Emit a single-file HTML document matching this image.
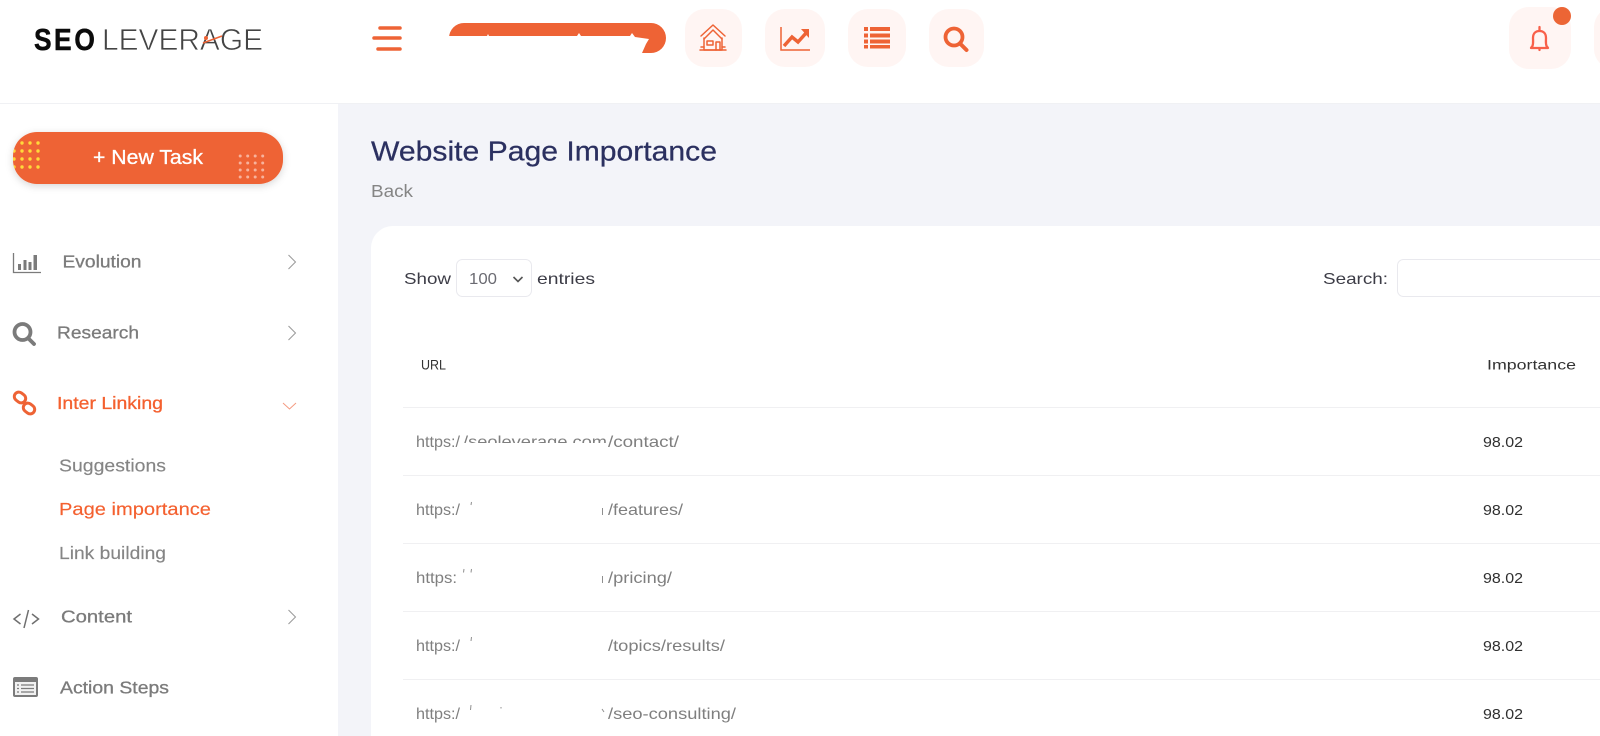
<!DOCTYPE html>
<html lang="en">
<head>
<meta charset="utf-8">
<title>Website Page Importance</title>
<style>
html,body{margin:0;padding:0;width:1600px;height:736px;overflow:hidden;background:#fff}
svg{display:block}
text{font-family:"Liberation Sans",sans-serif}
.nav{font-size:17.5px;color:#7b7b7b;fill:currentColor;stroke:currentColor;stroke-width:.3}
.act{color:#f4602f}
.sub{color:#858585;stroke-width:.15}
.url{font-size:16px;fill:#7f7f7f}
.num{font-size:14.5px;fill:#303030}
.lab{font-size:16px;fill:#3c3c46}
.oi{fill:none;stroke:#ee6335;stroke-width:1.500;stroke-linecap:round;stroke-linejoin:round}
.chev{fill:none;stroke:#999;stroke-width:1}
.rule{stroke:#f0f0f2;stroke-width:1}
</style>
</head>
<body>
<svg width="1600" height="736" viewBox="0 0 1600 736" xmlns="http://www.w3.org/2000/svg">
<defs>
<pattern id="yd" x="10" y="139" width="8" height="8" patternUnits="userSpaceOnUse"><circle cx="4" cy="4" r="1.700" fill="#ffd93a"/></pattern>
<pattern id="pd" x="236.500" y="152.500" width="7.500" height="7" patternUnits="userSpaceOnUse"><circle cx="3.700" cy="3.500" r="1.500" fill="#f7b29c"/></pattern>
<filter id="sh" x="-10%" y="-30%" width="120%" height="170%"><feDropShadow dx="0" dy="2" stdDeviation="4" flood-color="#000" flood-opacity=".16"/></filter>
<clipPath id="btn"><rect x="13" y="132" width="270" height="52" rx="24"/></clipPath>
</defs>

<!-- backgrounds -->
<rect width="1600" height="736" fill="#f3f4f9"/>
<rect x="0" y="0" width="1600" height="103" fill="#fff"/>
<rect x="0" y="103" width="1600" height="1" fill="#f0f1f4"/>
<rect x="0" y="104" width="338" height="632" fill="#fff"/>
<rect x="371" y="226" width="1260" height="540" rx="22" fill="#fff"/>

<!-- logo -->
<text transform="translate(34 50) scale(.85 1)" x="0 23.500 47.500" y="0" font-size="31" font-weight="700" fill="#0b0b0b" stroke="#0b0b0b" stroke-width=".5">SEO</text>
<text x="102" y="50" font-size="30.500" fill="#444" stroke="#fff" stroke-width=".7" textLength="161" lengthAdjust="spacingAndGlyphs">LEVERAGE</text>
<path d="M203 43 222 36" stroke="#ee6335" stroke-width="1.500"/>
<circle cx="206" cy="38" r="2" fill="#ee6335"/>

<!-- hamburger -->
<path d="M380 28H400M374 38H400M378 49H400" stroke="#ee6335" stroke-width="3.500" stroke-linecap="round"/>

<!-- redacted pill -->
<rect x="449" y="23" width="217" height="30" rx="15" fill="#ee6335"/>
<path d="M448 36H487L488 34 489 36H577L579 33 581 36H630L632 33 635 37 649 39 646 44 642 53H448Z" fill="#fff"/>

<!-- top tiles -->
<rect x="685" y="9" width="57" height="58" rx="20" fill="#fff5f3"/>
<rect x="765" y="9" width="60" height="58" rx="20" fill="#fff5f3"/>
<rect x="848" y="9" width="58" height="58" rx="20" fill="#fff5f3"/>
<rect x="929" y="9" width="55" height="58" rx="20" fill="#fff5f3"/>
<rect x="1509" y="7" width="62" height="62" rx="20" fill="#fff5f3"/>
<rect x="1594" y="7" width="40" height="62" rx="20" fill="#fff5f3"/>

<!-- home -->
<g class="oi">
<path d="M701 36 713 25 725 36"/>
<path d="M704 39 713 30 722 39"/>
<path d="M704 38V50H722V38"/>
<path d="M700 50H726M701 47H704M722 47H725"/>
<rect x="707" y="41" width="6" height="4"/>
<path d="M716 50V42H720V50"/>
</g>
<!-- chart -->
<g fill="none" stroke="#ee6335">
<path d="M781 27V50H810" stroke-width="1.500"/>
<path d="M784 46 792 37 798 42 807 32" stroke-width="3.500"/>
</g>
<path d="M801 29H809V38Z" fill="#ee6335"/>
<!-- list -->
<path d="M864 27H868V31H864ZM864 33.500H868V37.500H864ZM864 39.500H868V43.500H864ZM864 45H868V48.500H864ZM870 27H890V31H870ZM870 33.500H890V37.500H870ZM870 39.500H890V43.500H870ZM870 45H890V48.500H870Z" fill="#ee6335"/>
<!-- search -->
<circle cx="954" cy="37" r="8.500" fill="none" stroke="#ee6335" stroke-width="3.800"/>
<path d="M960.500 44 966.500 50" stroke="#ee6335" stroke-width="4" stroke-linecap="round"/>
<!-- bell -->
<path d="M1532.500 46C1533.500 43 1533 41 1533 38C1533 33.500 1535.500 31 1539.500 31S1546 33.500 1546 38C1546 41 1545.500 43 1546.500 46L1548 48H1531ZM1539.500 27V31M1539.500 48V50" fill="none" stroke="#f8604a" stroke-width="2.300" stroke-linecap="round" stroke-linejoin="round"/>
<circle cx="1562" cy="16" r="9" fill="#ec6535"/>

<!-- new task -->
<rect x="13" y="132" width="270" height="52" rx="24" fill="#ee6335" filter="url(#sh)"/>
<g clip-path="url(#btn)">
<rect x="13" y="139" width="29" height="32" fill="url(#yd)"/>
<rect x="237" y="153" width="30" height="28" fill="url(#pd)"/>
</g>
<text x="93" y="164" font-size="20" fill="#fff" stroke="#fff" stroke-width=".3" textLength="110" lengthAdjust="spacingAndGlyphs">+ New Task</text>

<!-- sidebar nav -->
<text class="nav" x="62.500" y="267.500" textLength="79" lengthAdjust="spacingAndGlyphs">Evolution</text>
<text class="nav" x="57" y="338.500" textLength="82" lengthAdjust="spacingAndGlyphs">Research</text>
<text class="nav act" x="57" y="409" textLength="106" lengthAdjust="spacingAndGlyphs">Inter Linking</text>
<text class="nav sub" x="59" y="471.500" textLength="107" lengthAdjust="spacingAndGlyphs">Suggestions</text>
<text class="nav act" x="59" y="515" textLength="152" lengthAdjust="spacingAndGlyphs" style="stroke-width:.15">Page importance</text>
<text class="nav sub" x="59" y="559" textLength="107" lengthAdjust="spacingAndGlyphs">Link building</text>
<text class="nav" x="61" y="622.500" textLength="71" lengthAdjust="spacingAndGlyphs">Content</text>
<text class="nav" x="60" y="693.500" textLength="109" lengthAdjust="spacingAndGlyphs">Action Steps</text>

<path class="chev" d="M288.500 255 295.500 262 288.500 269M288.500 326 295.500 333 288.500 340M288.500 610 295.500 617 288.500 624"/>
<path d="M283 403 289.500 409 296 403" fill="none" stroke="#f49a80" stroke-width="1"/>

<!-- nav icons -->
<path d="M13.500 253V272.500H41" fill="none" stroke="#7b7b7b" stroke-width="1.300"/>
<path d="M18 264H21V270H18ZM23.500 260H26.500V270H23.500ZM28.500 262H31.500V270H28.500ZM33.500 255H37V270H33.500Z" fill="#7b7b7b"/>
<circle cx="22.500" cy="332" r="8" fill="none" stroke="#7b7b7b" stroke-width="3.800"/>
<path d="M28.500 338.500 34 344" stroke="#7b7b7b" stroke-width="3.800" stroke-linecap="round"/>
<g fill="none" stroke="#ee6335" stroke-width="3">
<rect x="14" y="393" width="12" height="9" rx="4.500" transform="rotate(38 20 397.500)"/>
<rect x="23" y="404" width="12" height="9" rx="4.500" transform="rotate(38 29 408.500)"/>
</g>
<path d="M20.500 614 14 619 20.500 624M32 614 38.500 619 32 624M28.500 610 24 628" fill="none" stroke="#6f6f6f" stroke-width="1.500"/>
<rect x="13" y="677" width="25" height="20" rx="2" fill="#7b7b7b"/>
<rect x="15" y="682" width="21" height="13" fill="#f1f1f1"/>
<path d="M17 685H19M21 685H34M17 688.500H19M21 688.500H34M17 692H19M21 692H34" stroke="#7b7b7b" stroke-width="1.300"/>

<!-- title -->
<text x="371" y="160.500" font-size="28" fill="#2b3060" stroke="#2b3060" stroke-width=".25" textLength="346" lengthAdjust="spacingAndGlyphs">Website Page Importance</text>
<text x="371" y="197" font-size="17.500" fill="#858585" textLength="42" lengthAdjust="spacingAndGlyphs">Back</text>

<!-- controls -->
<text class="lab" x="404" y="284" textLength="47" lengthAdjust="spacingAndGlyphs">Show</text>
<rect x="456.500" y="259.500" width="75" height="37" rx="6" fill="#fff" stroke="#e9e9ee"/>
<text x="469" y="284" font-size="16" fill="#6b6b72" textLength="28" lengthAdjust="spacingAndGlyphs">100</text>
<path d="M513.500 277 518 281.500 522.500 277" fill="none" stroke="#555" stroke-width="1.600"/>
<text class="lab" x="537" y="284" textLength="58" lengthAdjust="spacingAndGlyphs">entries</text>
<text class="lab" x="1323" y="284" textLength="65" lengthAdjust="spacingAndGlyphs">Search:</text>
<rect x="1397.500" y="259.500" width="260" height="37" rx="6" fill="#fff" stroke="#e9e9ee"/>

<!-- table head -->
<text x="421" y="369.500" font-size="13.500" fill="#333" textLength="25" lengthAdjust="spacingAndGlyphs">URL</text>
<text x="1487" y="369.500" font-size="13.500" fill="#333" textLength="89" lengthAdjust="spacingAndGlyphs">Importance</text>
<path class="rule" d="M403 407.500H1600M403 475.500H1600M403 543.500H1600M403 611.500H1600M403 679.500H1600"/>

<!-- rows -->
<text class="url" x="416" y="447" textLength="44" lengthAdjust="spacingAndGlyphs">https:/</text>
<text class="url" x="463" y="447" textLength="144" lengthAdjust="spacingAndGlyphs">/seoleverage.com</text>
<rect x="461" y="443" width="146" height="10" fill="#fff"/>
<text class="url" x="608" y="447" textLength="71" lengthAdjust="spacingAndGlyphs">/contact/</text>
<text class="num" x="1483" y="447" textLength="40" lengthAdjust="spacingAndGlyphs">98.02</text>

<text class="url" x="416" y="515" textLength="44" lengthAdjust="spacingAndGlyphs">https:/</text>
<text class="url" x="608" y="515" textLength="75" lengthAdjust="spacingAndGlyphs">/features/</text>
<path d="M471.500 502 471 505M602.500 508V515" stroke="#8f8f8f" stroke-width="1"/>
<text class="num" x="1483" y="515" textLength="40" lengthAdjust="spacingAndGlyphs">98.02</text>

<text class="url" x="416" y="583" textLength="41" lengthAdjust="spacingAndGlyphs">https:</text>
<text class="url" x="608" y="583" textLength="64" lengthAdjust="spacingAndGlyphs">/pricing/</text>
<path d="M464 569 463.500 572.500M471.500 569 471 572.500M602.500 576V583" stroke="#8f8f8f" stroke-width="1"/>
<text class="num" x="1483" y="583" textLength="40" lengthAdjust="spacingAndGlyphs">98.02</text>

<text class="url" x="416" y="651" textLength="44" lengthAdjust="spacingAndGlyphs">https:/</text>
<text class="url" x="608" y="651" textLength="117" lengthAdjust="spacingAndGlyphs">/topics/results/</text>
<path d="M471.500 637 471 641" stroke="#8f8f8f" stroke-width="1"/>
<text class="num" x="1483" y="651" textLength="40" lengthAdjust="spacingAndGlyphs">98.02</text>

<text class="url" x="416" y="719" textLength="44" lengthAdjust="spacingAndGlyphs">https:/</text>
<text class="url" x="608" y="719" textLength="128" lengthAdjust="spacingAndGlyphs">/seo-consulting/</text>
<path d="M471 705 470.500 710M501 707V708.500M602 709 604 712" stroke="#8f8f8f" stroke-width="1"/>
<text class="num" x="1483" y="719" textLength="40" lengthAdjust="spacingAndGlyphs">98.02</text>
</svg>
</body>
</html>
